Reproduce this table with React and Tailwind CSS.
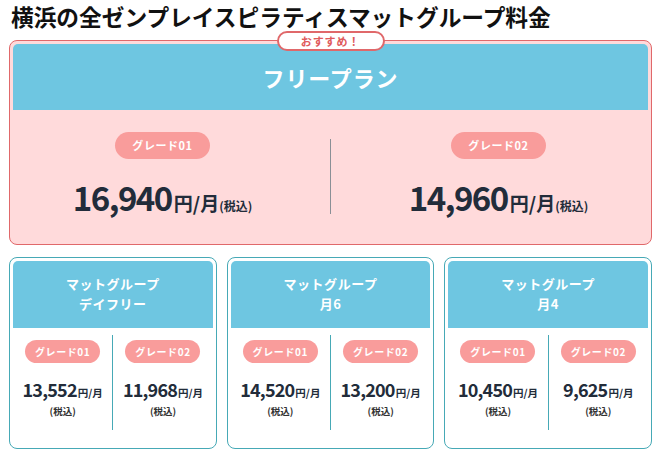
import React from "react";

const font = { fontFamily: '"Noto Sans CJK JP", "Noto Sans", sans-serif' };

function BigCol({ grade, price }) {
  return (
    <div className="flex flex-col items-center">
      <div className="h-[27px] w-[95px] rounded-full bg-[#f99c9b] flex items-center justify-center text-white text-[11px] font-bold tracking-[0.05em]">
        {grade}
      </div>
      <div className="mt-[22px] h-[33px] flex items-baseline text-[#222c3a] font-bold leading-none">
        <span className="text-[33px] leading-none tracking-[-1.5px] mr-[2px]">{price}</span>
        <span className="text-[19px] leading-none">円/月</span>
        <span className="text-[12px] leading-none font-semibold">(税込)</span>
      </div>
    </div>
  );
}

function SmallCol({ grade, price }) {
  return (
    <div className="flex flex-col items-center pt-[5px] pb-[12px]">
      <div className="h-[23px] w-[75px] rounded-full bg-[#f99c9b] flex items-center justify-center text-white text-[10px] font-bold tracking-[0.06em]">
        {grade}
      </div>
      <div className="mt-[14px] h-[24px] flex items-baseline text-[#222c3a] font-bold leading-[24px]">
        <span className="text-[18px] tracking-[-0.8px] mr-[1px]">{price}</span>
        <span className="text-[10.5px]">円/月</span>
      </div>
      <div className="mt-[3px] h-[14px] leading-[14px] text-[9.5px] font-semibold text-[#333]">
        (税込)
      </div>
    </div>
  );
}

function SmallCard({ title1, title2, p1, p2 }) {
  return (
    <div className="border-[1.5px] border-[#46a9b6] rounded-[8px] p-[3px] bg-white">
      <div className="h-[67px] bg-[#6ec6e1] rounded-t-[5px] flex flex-col items-center justify-center text-white font-bold text-[13px] leading-[20px] tracking-[0.04em]">
        <div>{title1}</div>
        <div>{title2}</div>
      </div>
      <div className="grid grid-cols-[1fr_1px_1fr] pt-[7px] pb-[15px]">
        <SmallCol grade="グレード01" price={p1} />
        <div className="bg-[#46a9b6]" />
        <SmallCol grade="グレード02" price={p2} />
      </div>
    </div>
  );
}

export default function App() {
  return (
    <div className="w-[661px] h-[457px] bg-white px-[9px] overflow-hidden" style={font}>
      <h1 className="pl-[2px] text-[22.7px] leading-[33px] font-bold text-[#111] whitespace-nowrap">
        横浜の全ゼンプレイスピラティスマットグループ料金
      </h1>
      <div className="relative mt-[7px] border-[1.5px] border-[#e0686a] rounded-[8px] p-[3px] bg-[#ffdadb]">
        <div className="absolute left-1/2 -translate-x-1/2 top-[-10px] h-[20px] w-[108px] rounded-full border-2 border-[#e0686a] bg-white flex items-center justify-center text-[#e05a5c] text-[11px] font-bold tracking-[0.08em] leading-none">
          おすすめ！
        </div>
        <div className="h-[66px] bg-[#6ec6e1] rounded-t-[5px] flex items-center justify-center text-white text-[22px] font-bold tracking-[0.04em]">
          フリープラン
        </div>
        <div className="grid grid-cols-[1fr_1px_1fr] gap-x-[18px] pt-[21.5px] pb-[27px]">
          <BigCol grade="グレード01" price="16,940" />
          <div className="mt-[7px] bg-[#8a8f96]" />
          <BigCol grade="グレード02" price="14,960" />
        </div>
      </div>
      <div className="mt-[12px] grid grid-cols-3 gap-[10px]">
        <SmallCard title1="マットグループ" title2="デイフリー" p1="13,552" p2="11,968" />
        <SmallCard title1="マットグループ" title2="月6" p1="14,520" p2="13,200" />
        <SmallCard title1="マットグループ" title2="月4" p1="10,450" p2="9,625" />
      </div>
    </div>
  );
}
